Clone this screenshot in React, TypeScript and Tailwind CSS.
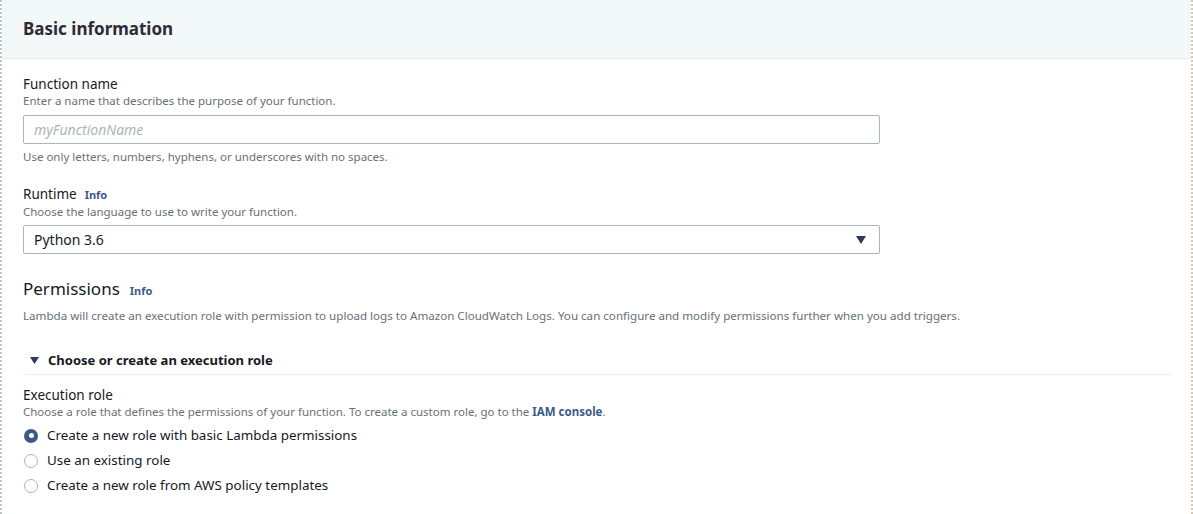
import React from "react";

const font = { fontFamily: '"Noto Sans", "Open Sans", Arial, sans-serif' };

function Radio({ checked, label }: { checked?: boolean; label: string }) {
  return (
    <div className="flex items-center h-[25px]">
      {checked ? (
        <span className="w-[14px] h-[14px] rounded-full bg-[#3b5b86] flex items-center justify-center ml-[1px]">
          <span className="w-[5px] h-[5px] rounded-full bg-white" />
        </span>
      ) : (
        <span className="w-[14px] h-[14px] rounded-full border border-[#aab7b8] bg-white ml-[1px]" />
      )}
      <span className="ml-[9px] text-[13.4px] text-[#16191f]">{label}</span>
    </div>
  );
}

export default function App() {
  return (
    <div className="w-[1193px] h-[514px] bg-white overflow-hidden" style={font}>
      <div className="h-full border-l-2 border-r-2 border-dotted border-l-[#b9c6c6] border-r-[#d8c7a8] flex flex-col">
        <div className="h-[59px] bg-[#f3f8f8] border-b border-[#e1eded] flex items-center pl-[21px] pb-[2px]">
          <h2 className="text-[17px] font-bold text-[#2f2b36] leading-none">Basic information</h2>
        </div>
        <div className="pl-[21px] pr-[20px] pt-[16px]">
          <div className="text-[13.5px] text-[#16191f] leading-[18px]">Function name</div>
          <div className="text-[11.5px] text-[#687078] leading-[16px]">Enter a name that describes the purpose of your function.</div>
          <div className="mt-[6px] w-[857px] h-[29px] border border-[#aab7b8] rounded-[2px] flex items-center pl-[10px]">
            <span className="text-[14px] italic text-[#aab7b8]">myFunctionName</span>
          </div>
          <div className="mt-[5px] text-[11.5px] text-[#687078] leading-[16px]">Use only letters, numbers, hyphens, or underscores with no spaces.</div>

          <div className="mt-[20px] flex items-baseline leading-[18px]">
            <span className="text-[13.5px] text-[#16191f]">Runtime</span>
            <span className="ml-[8px] text-[11px] font-bold text-[#3b5b86]">Info</span>
          </div>
          <div className="text-[11.5px] text-[#687078] leading-[16px]">Choose the language to use to write your function.</div>
          <div className="mt-[5px] w-[857px] h-[29px] border border-[#aab7b8] rounded-[2px] flex items-center justify-between pl-[10px] pr-[13px]">
            <span className="text-[14px] text-[#16191f]">Python 3.6</span>
            <svg width="10" height="8" viewBox="0 0 10 8"><path d="M0 0h10L5 8z" fill="#2f3a56" /></svg>
          </div>

          <div className="mt-[23px] flex items-baseline leading-[24px]">
            <span className="text-[17px] text-[#16191f]">Permissions</span>
            <span className="ml-[10px] text-[11px] font-bold text-[#3b5b86]">Info</span>
          </div>
          <div className="mt-[5px] text-[11.6px] text-[#687078] leading-[16px]">
            Lambda will create an execution role with permission to upload logs to Amazon CloudWatch Logs. You can configure and modify permissions further when you add triggers.
          </div>

          <div className="mt-[24px] w-[1148px] h-[27px] border-b border-[#e9eeee] flex items-center pl-[7px] pb-[1px]">
            <svg width="9" height="7" viewBox="0 0 9 7"><path d="M0 0h9L4.5 7z" fill="#2f3a56" /></svg>
            <span className="ml-[9px] text-[13px] font-bold text-[#16191f]">Choose or create an execution role</span>
          </div>

          <div className="mt-[11px] text-[13.5px] text-[#16191f] leading-[18px]">Execution role</div>
          <div className="text-[11.5px] text-[#687078] leading-[16px]">
            Choose a role that defines the permissions of your function. To create a custom role, go to the{" "}
            <span className="font-bold text-[#3b5b86]">IAM console</span>.
          </div>
          <div className="mt-[3px] flex flex-col">
            <Radio checked label="Create a new role with basic Lambda permissions" />
            <Radio label="Use an existing role" />
            <Radio label="Create a new role from AWS policy templates" />
          </div>
        </div>
      </div>
    </div>
  );
}
